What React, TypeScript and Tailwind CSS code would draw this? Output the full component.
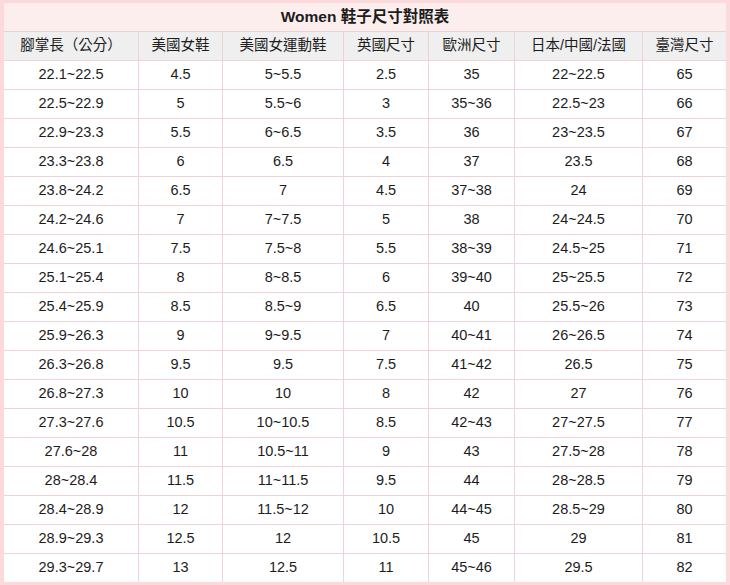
const COLS = "grid-cols-[134px_84px_121px_85px_86px_128px_84px]";

const HEADERS = ["腳掌長（公分）", "美國女鞋", "美國女運動鞋", "英國尺寸", "歐洲尺寸", "日本/中國/法國", "臺灣尺寸"];

const ROWS: string[][] = [
  ["22.1~22.5", "4.5", "5~5.5", "2.5", "35", "22~22.5", "65"],
  ["22.5~22.9", "5", "5.5~6", "3", "35~36", "22.5~23", "66"],
  ["22.9~23.3", "5.5", "6~6.5", "3.5", "36", "23~23.5", "67"],
  ["23.3~23.8", "6", "6.5", "4", "37", "23.5", "68"],
  ["23.8~24.2", "6.5", "7", "4.5", "37~38", "24", "69"],
  ["24.2~24.6", "7", "7~7.5", "5", "38", "24~24.5", "70"],
  ["24.6~25.1", "7.5", "7.5~8", "5.5", "38~39", "24.5~25", "71"],
  ["25.1~25.4", "8", "8~8.5", "6", "39~40", "25~25.5", "72"],
  ["25.4~25.9", "8.5", "8.5~9", "6.5", "40", "25.5~26", "73"],
  ["25.9~26.3", "9", "9~9.5", "7", "40~41", "26~26.5", "74"],
  ["26.3~26.8", "9.5", "9.5", "7.5", "41~42", "26.5", "75"],
  ["26.8~27.3", "10", "10", "8", "42", "27", "76"],
  ["27.3~27.6", "10.5", "10~10.5", "8.5", "42~43", "27~27.5", "77"],
  ["27.6~28", "11", "10.5~11", "9", "43", "27.5~28", "78"],
  ["28~28.4", "11.5", "11~11.5", "9.5", "44", "28~28.5", "79"],
  ["28.4~28.9", "12", "11.5~12", "10", "44~45", "28.5~29", "80"],
  ["28.9~29.3", "12.5", "12", "10.5", "45", "29", "81"],
  ["29.3~29.7", "13", "12.5", "11", "45~46", "29.5", "82"],
];

/** Women shoe size conversion chart */
export default function App() {
  return (
    <div
      className="w-[730px] h-[585px] bg-[#fcd9db] pt-[3px] px-[4px] text-[#1c1c1c]"
      style={{ fontFamily: '"Liberation Sans", Arial, "Noto Sans CJK TC", sans-serif' }}
    >
      <div className="bg-white">
        {/* Title */}
        <div className="h-[28px] bg-[#fdeeee] flex items-center justify-center font-bold text-[15.5px]">
          Women 鞋子尺寸對照表
        </div>

        {/* Header */}
        <div className={`grid ${COLS} bg-[#efefef]`}>
          {HEADERS.map((h, i) => (
            <div
              key={h}
              className={`h-[29px] flex items-center justify-center border-t border-[#e7d3d6] text-[14.5px] ${
                i > 0 ? "border-l" : ""
              }`}
            >
              {h}
            </div>
          ))}
        </div>

        {/* Rows */}
        {ROWS.map((row) => (
          <div key={row[0]} className={`grid ${COLS}`}>
            {row.map((cell, i) => (
              <div
                key={i}
                className={`h-[29px] flex items-center justify-center border-t border-[#f0d2d7] text-[14.5px] ${
                  i > 0 ? "border-l" : ""
                }`}
              >
                {cell}
              </div>
            ))}
          </div>
        ))}
      </div>
    </div>
  );
}
